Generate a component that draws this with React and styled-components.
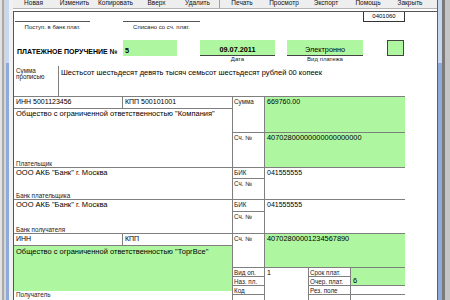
import React from 'react';
import styled, { createGlobalStyle } from 'styled-components';

const GREEN = '#aef7a0';
const LINE = '#7f7f7f';

const Global = createGlobalStyle`
  html, body { margin: 0; padding: 0; background: #d8d8d8; }
  body { font-family: "Liberation Sans", Arial, sans-serif; color: #000; }
`;

const Screen = styled.div`
  width: 450px;
  height: 300px;
  overflow: hidden;
  display: flex;
  background: #d8d8d8;
`;

const Frame = styled.div`
  flex: none;
  display: flex;
  height: 100%;
`;

const Strip = styled.div`
  flex: none;
  width: ${p => p.$w}px;
  background: ${p =>
    p.$blue ? 'linear-gradient(#c9d6ef 0, #c9d6ef 63px, #8fa9d9 63px)' : p.$bg};
`;

const Center = styled.div`
  flex: 1;
  display: flex;
  flex-direction: column;
  background: #fff;
  min-width: 0;
`;

const Toolbar = styled.div`
  flex: none;
  height: 8px;
  display: flex;
  align-items: flex-end;
  background: #eeeeee;
  border-bottom: 1px solid #b5b5b5;
  overflow: hidden;
  padding-left: ${p => p.$pl}px;
`;

const ToolButton = styled.div`
  flex: none;
  width: ${p => p.$w}px;
  text-align: center;
  font-size: 6.5px;
  line-height: 7px;
  margin-bottom: 2px;
  color: #111;
  white-space: nowrap;
`;

const ToolSep = styled.div`
  flex: none;
  width: 1px;
  height: 8px;
  background: #a0a0a0;
  margin: 0 ${p => p.$m}px;
`;

const Page = styled.div`
  flex: 1;
  margin-top: 2px;
  border-top: 1px solid #555;
  border-left: 1px solid #555;
  background: #fff;
  overflow: hidden;
`;

const Form = styled.div`
  width: 391px;
  display: flex;
  flex-direction: column;
`;

const TopBand = styled.div`
  height: 28px;
  display: flex;
  align-items: flex-start;
`;

const Stamp = styled.div`
  flex: none;
  width: ${p => p.$w}px;
  margin-left: ${p => p.$ml}px;
  margin-top: 9px;
  border-top: 1px solid #555;
  padding-top: 2px;
  font-size: 6px;
  line-height: 6px;
  text-align: center;
  color: #222;
  white-space: nowrap;
`;

const CodeBox = styled.div`
  flex: none;
  margin-left: auto;
  margin-top: -1px;
  width: 42px;
  height: 11px;
  box-sizing: border-box;
  border: 1px solid #333;
  font-size: 6px;
  line-height: 9px;
  text-align: center;
`;

const TitleRow = styled.div`
  height: 16px;
  display: flex;
`;

const Title = styled.div`
  flex: none;
  width: 106px;
  padding-left: 3px;
  display: flex;
  align-items: flex-end;
  padding-bottom: 1px;
  font-size: 7px;
  font-weight: bold;
  white-space: nowrap;
`;

const Field = styled.div`
  flex: none;
  box-sizing: border-box;
  width: ${p => p.$w}px;
  margin-left: ${p => p.$ml || 0}px;
  background: ${GREEN};
  display: flex;
  align-items: flex-end;
  justify-content: ${p => (p.$center ? 'center' : 'flex-start')};
  padding: 0 2px 1px;
  font-size: 7.3px;
  line-height: 8px;
  font-weight: ${p => (p.$bold ? 'bold' : 'normal')};
  border-bottom: ${p => (p.$underline ? `1px solid #444` : 'none')};
  border: ${p => (p.$boxed ? `1px solid #444` : undefined)};
`;

const CaptionRow = styled.div`
  height: 6px;
  display: flex;
`;

const Caption = styled.div`
  flex: none;
  width: ${p => p.$w}px;
  margin-left: ${p => p.$ml}px;
  font-size: 6px;
  line-height: 6px;
  text-align: center;
  color: #222;
`;

const SumRow = styled.div`
  height: 34px;
  display: flex;
`;

const SumLabel = styled.div`
  flex: none;
  width: 42px;
  padding-left: 2px;
  padding-top: 6px;
  font-size: 6.3px;
  line-height: 6px;
  color: #222;
`;

const VDivider = styled.div`
  flex: none;
  width: 1px;
  margin-top: 4px;
  background: ${LINE};
`;

const SumText = styled.div`
  padding-left: 2px;
  padding-top: 7px;
  font-size: 7.5px;
  line-height: 8px;
  white-space: nowrap;
`;

const Grid = styled.div`
  display: grid;
  grid-template-columns: 108px 109px 31px 43px 41px 54px;
  grid-template-rows: 11px 23px 34px 10px 20px 11px 21px 11px 21px 8px 8px 8px 10px;
  gap: 1px;
  padding-top: 1px;
  background: ${LINE};
`;

const Cell = styled.div`
  grid-column: ${p => p.$c};
  grid-row: ${p => p.$r};
  background: ${p => (p.$green ? GREEN : '#fff')};
  display: flex;
  flex-direction: column;
  justify-content: ${p => (p.$spread ? 'space-between' : p.$bottom ? 'flex-end' : 'flex-start')};
  padding: ${p => (p.$label ? '1px 1px 0' : '1px 2px 0')};
  font-size: ${p => (p.$label ? '6.3px' : '7px')};
  line-height: ${p => (p.$label ? '7px' : '8px')};
  color: ${p => (p.$label ? '#222' : '#000')};
  white-space: nowrap;
  overflow: hidden;
  min-width: 0;
`;

const Value = styled.div`
  font-size: ${p => (p.$acc ? '7.4px' : '7.5px')};
  line-height: 8px;
`;

const Label = styled.div`
  font-size: 6.3px;
  line-height: 7px;
  color: #222;
`;

const GreenArea = styled.div`
  flex: none;
  height: 43px;
  background: ${GREEN};
  margin: -1px -2px 0;
  padding: 2px 2px 0;
  font-size: 7.5px;
  line-height: 8px;
`;

const leftTools = ['Новая', 'Изменить', 'Копировать', 'Вверх', 'Удалить'];
const rightTools = ['Печать', 'Просмотр', 'Экспорт', 'Помощь', 'Закрыть'];

export default function App() {
  return (
    <>
      <Global />
      <Screen>
        <Frame>
          <Strip $w={2} $bg="#e2e2e2" />
          <Strip $w={2} $bg="#a9a9a9" />
          <Strip $w={2} $bg="#d6d6d6" />
          <Strip $w={3} $blue />
          <Strip $w={4} $bg="#f1f1f1" />
        </Frame>
        <Center>
          <Toolbar $pl={-2}>
            {leftTools.map(t => (
              <ToolButton key={t} $w={41}>{t}</ToolButton>
            ))}
            <ToolSep $m={1} />
            {rightTools.map(t => (
              <ToolButton key={t} $w={42}>{t}</ToolButton>
            ))}
          </Toolbar>
          <Page>
            <Form>
              <TopBand>
                <Stamp $w={75} $ml={1}>Поступ. в банк плат.</Stamp>
                <Stamp $w={77} $ml={33}>Списано со сч. плат.</Stamp>
                <CodeBox>0401060</CodeBox>
              </TopBand>
              <TitleRow>
                <Title>ПЛАТЕЖНОЕ ПОРУЧЕНИЕ №</Title>
                <Field $w={54} $bold>5</Field>
                <Field $w={75} $ml={23} $bold $center $underline>09.07.2011</Field>
                <Field $w={76} $ml={12} $center $underline>Электронно</Field>
                <Field $w={17} $ml={24} $boxed />
              </TitleRow>
              <CaptionRow>
                <Caption $w={75} $ml={186}>Дата</Caption>
                <Caption $w={76} $ml={12}>Вид платежа</Caption>
              </CaptionRow>
              <SumRow>
                <SumLabel>Сумма<br />прописью</SumLabel>
                <VDivider />
                <SumText>Шестьсот шестьдесят девять тысяч семьсот шестьдесят рублей 00 копеек</SumText>
              </SumRow>
              <Grid>
                <Cell $c="1" $r="1">ИНН 5001123456</Cell>
                <Cell $c="2" $r="1">КПП 500101001</Cell>
                <Cell $c="3" $r="1 / 3" $label>Сумма</Cell>
                <Cell $c="4 / 7" $r="1 / 3" $green>669760.00</Cell>

                <Cell $c="1 / 3" $r="2 / 4" $spread>
                  <Value>Общество с ограниченной ответственностью "Компания"</Value>
                  <Label>Плательщик</Label>
                </Cell>
                <Cell $c="3" $r="3" $label>Сч. №</Cell>
                <Cell $c="4 / 7" $r="3" $green>
                  <Value $acc>40702800000000000000000</Value>
                </Cell>

                <Cell $c="1 / 3" $r="4 / 6" $spread>
                  <Value>ООО АКБ "Банк" г. Москва</Value>
                  <Label>Банк плательщика</Label>
                </Cell>
                <Cell $c="3" $r="4" $label>БИК</Cell>
                <Cell $c="4 / 7" $r="4 / 6">041555555</Cell>
                <Cell $c="3" $r="5" $label>Сч. №</Cell>

                <Cell $c="1 / 3" $r="6 / 8" $spread>
                  <Value>ООО АКБ "Банк" г. Москва</Value>
                  <Label>Банк получателя</Label>
                </Cell>
                <Cell $c="3" $r="6" $label>БИК</Cell>
                <Cell $c="4 / 7" $r="6 / 8">041555555</Cell>
                <Cell $c="3" $r="7" $label>Сч. №</Cell>

                <Cell $c="1" $r="8">ИНН</Cell>
                <Cell $c="2" $r="8">КПП</Cell>
                <Cell $c="3" $r="8 / 10" $label>Сч. №</Cell>
                <Cell $c="4 / 7" $r="8 / 10" $green>
                  <Value $acc>40702800001234567890</Value>
                </Cell>

                <Cell $c="1 / 3" $r="9 / 14">
                  <GreenArea>Общество с ограниченной ответственностью "ТоргВсе"</GreenArea>
                  <Label>Получатель</Label>
                </Cell>

                <Cell $c="3" $r="10" $label>Вид оп.</Cell>
                <Cell $c="4" $r="10 / 14">1</Cell>
                <Cell $c="5" $r="10" $label>Срок плат.</Cell>
                <Cell $c="6" $r="10 / 12" $green $bottom>
                  <Value>6</Value>
                </Cell>
                <Cell $c="3" $r="11" $label>Наз. пл.</Cell>
                <Cell $c="5" $r="11" $label>Очер. плат.</Cell>
                <Cell $c="3" $r="12" $label>Код</Cell>
                <Cell $c="5" $r="12" $label>Рез. поле</Cell>
                <Cell $c="6" $r="12" />
                <Cell $c="3" $r="13" $label />
                <Cell $c="5" $r="13" $label />
                <Cell $c="6" $r="13" />
              </Grid>
            </Form>
          </Page>
        </Center>
        <Frame>
          <Strip $w={1} $bg="#606060" />
          <Strip $w={4} $blue />
          <Strip $w={3} $bg="#7a7a7a" />
          <Strip $w={5} $bg="#c4c4c4" />
        </Frame>
      </Screen>
    </>
  );
}
